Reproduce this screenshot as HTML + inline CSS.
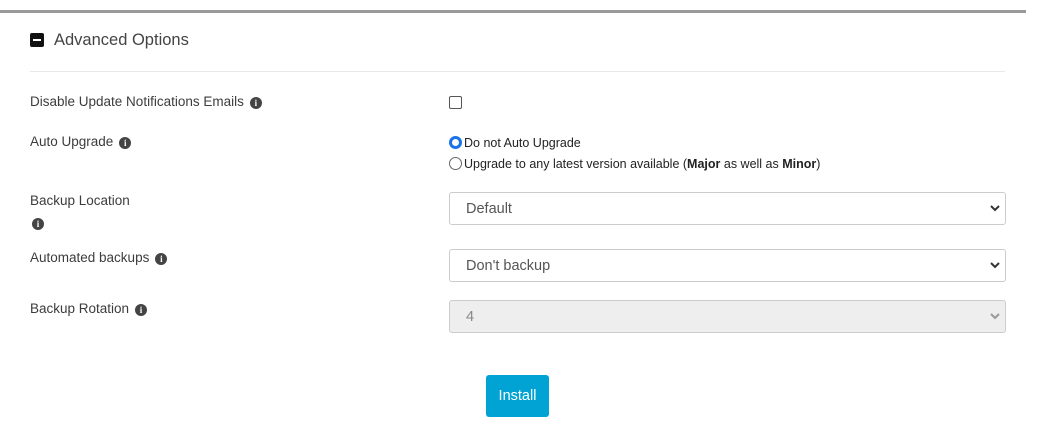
<!DOCTYPE html>
<html><head><style>
body{margin:0;width:1041px;height:428px;background:#fff;font-family:"Liberation Sans",sans-serif;position:relative;overflow:hidden;color:#444}
.a{position:absolute;white-space:nowrap}
.lbl{font-size:13.5px;color:#3c3c3c}
.i{display:inline-block;width:12px;height:12px;border-radius:50%;background:#444;color:#fff;font:bold 9px/12px "Liberation Serif",serif;text-align:center;vertical-align:0px;margin-left:6px}
.sel{position:absolute;left:449px;width:555px;height:31px;border:1px solid #ccc;border-radius:3px;background:#fff;font-size:14.5px;color:#555;box-sizing:content-box}
.sel span{position:absolute;left:16px;top:8px}
.sel svg{position:absolute;right:5px;top:12px}
.radio{display:inline-block;width:13px;height:13px;border:1px solid #666;border-radius:50%;vertical-align:-2px;margin-right:2px;box-sizing:border-box}
</style></head><body>
<div class="a" style="left:0;top:10px;width:1026px;height:3px;background:#999"></div>
<div class="a" style="left:30px;top:33px;width:14px;height:14px;background:#111;border-radius:2px"><div style="position:absolute;left:3px;top:6px;width:8px;height:2px;background:#fff"></div></div>
<div class="a" style="left:54px;top:31px;font-size:16.5px;color:#444">Advanced Options</div>
<div class="a" style="left:30px;top:71px;width:975px;height:1px;background:#e8e8e8"></div>
<div class="a lbl" style="left:30px;top:94px">Disable Update Notifications Emails<span class="i">i</span></div>
<div class="a" style="left:449px;top:96px;width:11px;height:11px;border:1px solid #555;border-radius:2px"></div>
<div class="a lbl" style="left:30px;top:134px">Auto Upgrade<span class="i">i</span></div>
<div class="a" style="left:449px;top:136px;font-size:12.5px;color:#222"><span class="radio" style="border:3px solid #1a73e8;background:#fff"></span>Do not Auto Upgrade</div>
<div class="a" style="left:449px;top:157px;font-size:12.5px;color:#222"><span class="radio"></span>Upgrade to any latest version available (<b>Major</b> as well as <b>Minor</b>)</div>
<div class="a lbl" style="left:30px;top:193px">Backup Location</div>
<div class="a lbl" style="left:26px;top:215px"><span class="i">i</span></div>
<div class="sel" style="top:192px"><span>Default</span><svg width="10" height="7"><path d="M1 1l4 4 4-4" stroke="#333" stroke-width="2" fill="none"/></svg></div>
<div class="a lbl" style="left:30px;top:250px">Automated backups<span class="i">i</span></div>
<div class="sel" style="top:249px"><span>Don't backup</span><svg width="10" height="7"><path d="M1 1l4 4 4-4" stroke="#333" stroke-width="2" fill="none"/></svg></div>
<div class="a lbl" style="left:30px;top:301px">Backup Rotation<span class="i">i</span></div>
<div class="sel" style="top:300px;background:#eee;color:#888"><span>4</span><svg width="10" height="7"><path d="M1 1l4 4 4-4" stroke="#999" stroke-width="2" fill="none"/></svg></div>
<div class="a" style="left:486px;top:375px;width:63px;height:42px;background:#00a3d3;border-radius:3px;color:#fff;font-size:14.5px;line-height:42px;text-align:center">Install</div>
</body></html>
